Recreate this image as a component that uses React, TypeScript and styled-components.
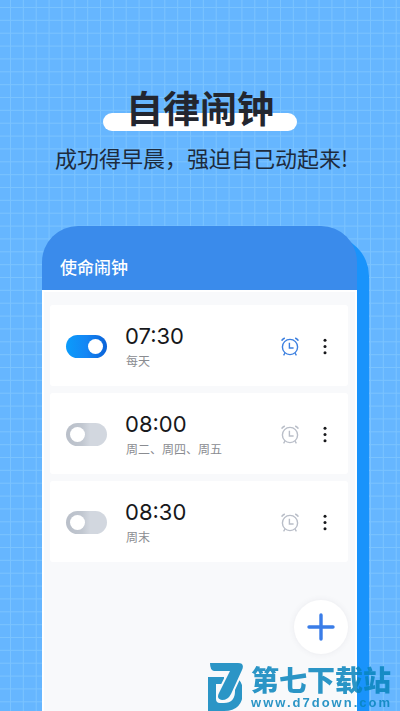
import { useState } from "react";
import styled, { createGlobalStyle } from "styled-components";

const GlobalStyle = createGlobalStyle`
  * { box-sizing: border-box; }
  body {
    margin: 0;
    font-family: "Noto Sans CJK SC", "Noto Sans", sans-serif;
    background: #66b6ff;
  }
`;

const Page = styled.main`
  position: relative;
  display: flex;
  flex-direction: column;
  min-height: 100vh;
  overflow: hidden;
  background: #66b6ff;
`;

const GridPaper = styled.svg`
  position: absolute;
  inset: 0;
  width: 100%;
  height: 100%;
`;

const Hero = styled.header`
  position: relative;
  display: flex;
  flex-direction: column;
  align-items: center;
  gap: 12px;
  padding-top: 85px;
`;

const Title = styled.h1`
  position: relative;
  z-index: 0;
  margin: 0;
  padding: 0 23px;
  font-size: 37px;
  line-height: 44px;
  font-weight: 700;
  color: #23262f;

  &::before {
    content: "";
    position: absolute;
    inset: 28px 0 -2px;
    z-index: -1;
    border-radius: 9px;
    background: #fff;
  }
`;

const Slogan = styled.p`
  margin: 0;
  padding-left: 3px;
  font-size: 22px;
  line-height: 32px;
  font-weight: 400;
  color: #1d2b3d;
  white-space: nowrap;
`;

const Device = styled.section`
  position: relative;
  z-index: 0;
  flex: 1;
  display: flex;
  flex-direction: column;
  margin: 53px 43px 0 42px;

  &::before {
    content: "";
    position: absolute;
    inset: 10px -12px 0 40px;
    z-index: -1;
    border-radius: 0 40px 0 0;
    background: #1993fb;
  }
`;

const AppBar = styled.div`
  display: flex;
  align-items: flex-end;
  height: 64px;
  padding: 0 18px 11px;
  border-radius: 36px 36px 0 0;
  background: #3a8beb;
`;

const AppTitle = styled.h2`
  margin: 0;
  font-size: 17px;
  line-height: 24px;
  font-weight: 500;
  color: #fff;
`;

const Screen = styled.div`
  position: relative;
  flex: 1;
  padding: 13px 7px 58px 6px;
  border: solid #fff;
  border-width: 2px 2px 0;
  background: #f8f9fb;
`;

const AlarmList = styled.ul`
  display: flex;
  flex-direction: column;
  gap: 7px;
  margin: 0;
  padding: 0;
  list-style: none;
`;

const AlarmCard = styled.li`
  display: flex;
  align-items: center;
  height: 81px;
  padding: 2px 12px 0 16px;
  border-radius: 3px;
  background: #fff;
`;

const Toggle = styled.input`
  appearance: none;
  flex: none;
  display: flex;
  align-items: center;
  width: 41px;
  height: 23px;
  margin: 0;
  padding: 0 4px;
  border-radius: 12px;
  background: linear-gradient(90deg, #b9bfc9 0, #c1c7d0 16px, #d2d7df 24px);
  cursor: pointer;

  &::before {
    content: "";
    width: 15px;
    height: 15px;
    border-radius: 50%;
    background: #fff;
  }

  &:checked {
    justify-content: flex-end;
    background: linear-gradient(90deg, #0b9cfb 0, #1486f4 50%, #0a62d8 100%);
  }
`;

const AlarmText = styled.label`
  flex: 1;
  display: flex;
  flex-direction: column;
  padding: 1px 0 0 18px;
`;

const Time = styled.span`
  font-family: Inter, "Noto Sans", sans-serif;
  font-size: 22px;
  line-height: 28px;
  font-weight: 400;
  color: #17181b;
`;

const Repeat = styled.span`
  padding-left: 1px;
  font-size: 12px;
  line-height: 22px;
  font-weight: 400;
  color: #8a8c91;
`;

const IconButton = styled.button<{ $color: string }>`
  display: flex;
  align-items: center;
  justify-content: center;
  width: 22px;
  height: 24px;
  margin-left: 13px;
  padding: 0;
  border: 0;
  background: none;
  color: ${(p) => p.$color};
  cursor: pointer;
`;

const AddButton = styled.button`
  position: absolute;
  right: 7px;
  bottom: 57px;
  display: flex;
  align-items: center;
  justify-content: center;
  width: 54px;
  height: 54px;
  padding: 0;
  border: 0;
  border-radius: 50%;
  background: #fff;
  box-shadow: 0 0 6px rgba(60, 70, 90, 0.08);
  color: #3a7de8;
  cursor: pointer;
`;

const Watermark = styled.a`
  position: absolute;
  right: 8px;
  bottom: 0;
  display: flex;
  gap: 7px;
  color: #0884bd;
  opacity: 0.85;
  text-decoration: none;
`;

const WatermarkText = styled.span`
  display: flex;
  flex-direction: column;
  justify-content: space-between;
`;

const SiteName = styled.strong`
  font-size: 28px;
  line-height: 32px;
  font-weight: 900;
`;

const SiteAddress = styled.span`
  font-family: "Liberation Sans", sans-serif;
  font-size: 13px;
  line-height: 16px;
  font-weight: 700;
  letter-spacing: 2px;
`;

const gridLines = [0, 1, 2, 3, 4, 5, 6].map((n) => (n * 90) / 7);

function AlarmIcon() {
  return (
    <svg width="20" height="20" viewBox="0 0 20 20" fill="none" stroke="currentColor" strokeWidth="1.4" aria-hidden="true">
      <circle cx="10" cy="10" r="7.6" />
      <path d="M9.4 5.8V11h4.2" />
      <path d="M1.6 3.6Q2.8 1.8 4.8 1M18.4 3.6Q17.2 1.8 15.2 1" strokeWidth="1.7" />
      <path d="m5 16-1.4 2.4M15 16l1.4 2.4" />
    </svg>
  );
}

function MoreIcon() {
  return (
    <svg width="4" height="18" viewBox="0 0 4 18" fill="currentColor" aria-hidden="true">
      <circle cx="2" cy="2.2" r="1.5" />
      <circle cx="2" cy="8.5" r="1.5" />
      <circle cx="2" cy="14.8" r="1.5" />
    </svg>
  );
}

function SiteLogo() {
  const seven = "M2 0H30Q37 0 34 7L23 31Q20 37 14 37 8 36 11 30L22 8H6Q2 7 2 0Z";
  return (
    <svg width="36" height="48" viewBox="0 0 36 48" fill="currentColor" aria-hidden="true">
      <mask id="logo-gap">
        <rect width="36" height="48" fill="#fff" />
        <path d={seven} fill="#000" stroke="#000" strokeWidth="4" />
      </mask>
      <g mask="url(#logo-gap)">
        <path d="M0 14H16V21H8V36Q8 40 12 40L6 48H0Z" />
        <path d="M24 17Q31 20 31 28 31 44 16 44H4" fill="none" stroke="currentColor" strokeWidth="8" />
      </g>
      <path d={seven} />
    </svg>
  );
}

const initialAlarms = [
  { id: "a1", time: "07:30", repeat: "每天", on: true },
  { id: "a2", time: "08:00", repeat: "周二、周四、周五", on: false },
  { id: "a3", time: "08:30", repeat: "周末", on: false },
];

export default function App() {
  const [alarms, setAlarms] = useState(initialAlarms);
  const toggle = (id: string) =>
    setAlarms((list) => list.map((a) => (a.id === id ? { ...a, on: !a.on } : a)));

  return (
    <>
      <GlobalStyle />
      <Page>
        <GridPaper aria-hidden="true">
          <defs>
            <pattern id="grid" x="10" y="7" width="90" height="90" patternUnits="userSpaceOnUse">
              {gridLines.map((p) => (
                <g key={p} fill="#7ac3ff">
                  <rect x={p} y="0" width="1" height="90" />
                  <rect x="0" y={p} width="90" height="1" />
                </g>
              ))}
            </pattern>
          </defs>
          <rect width="100%" height="100%" fill="url(#grid)" />
        </GridPaper>
        <Hero>
          <Title>自律闹钟</Title>
          <Slogan>成功得早晨，强迫自己动起来!</Slogan>
        </Hero>
        <Device>
          <AppBar>
            <AppTitle>使命闹钟</AppTitle>
          </AppBar>
          <Screen>
            <AlarmList>
              {alarms.map((a) => (
                <AlarmCard key={a.id}>
                  <Toggle id={a.id} type="checkbox" checked={a.on} onChange={() => toggle(a.id)} />
                  <AlarmText htmlFor={a.id}>
                    <Time>{a.time}</Time>
                    <Repeat>{a.repeat}</Repeat>
                  </AlarmText>
                  <IconButton type="button" aria-label="响铃" $color={a.on ? "#3d80e0" : "#b9bec8"}>
                    <AlarmIcon />
                  </IconButton>
                  <IconButton type="button" aria-label="更多" $color="#17181b">
                    <MoreIcon />
                  </IconButton>
                </AlarmCard>
              ))}
            </AlarmList>
            <AddButton type="button" aria-label="添加闹钟">
              <svg width="28" height="28" viewBox="0 0 28 28" stroke="currentColor" strokeWidth="3.4" strokeLinecap="round" aria-hidden="true">
                <path d="M14 2v24M2 14h24" />
              </svg>
            </AddButton>
          </Screen>
        </Device>
        <Watermark href="#site">
          <SiteLogo />
          <WatermarkText>
            <SiteName>第七下载站</SiteName>
            <SiteAddress>www.d7down.com</SiteAddress>
          </WatermarkText>
        </Watermark>
      </Page>
    </>
  );
}
